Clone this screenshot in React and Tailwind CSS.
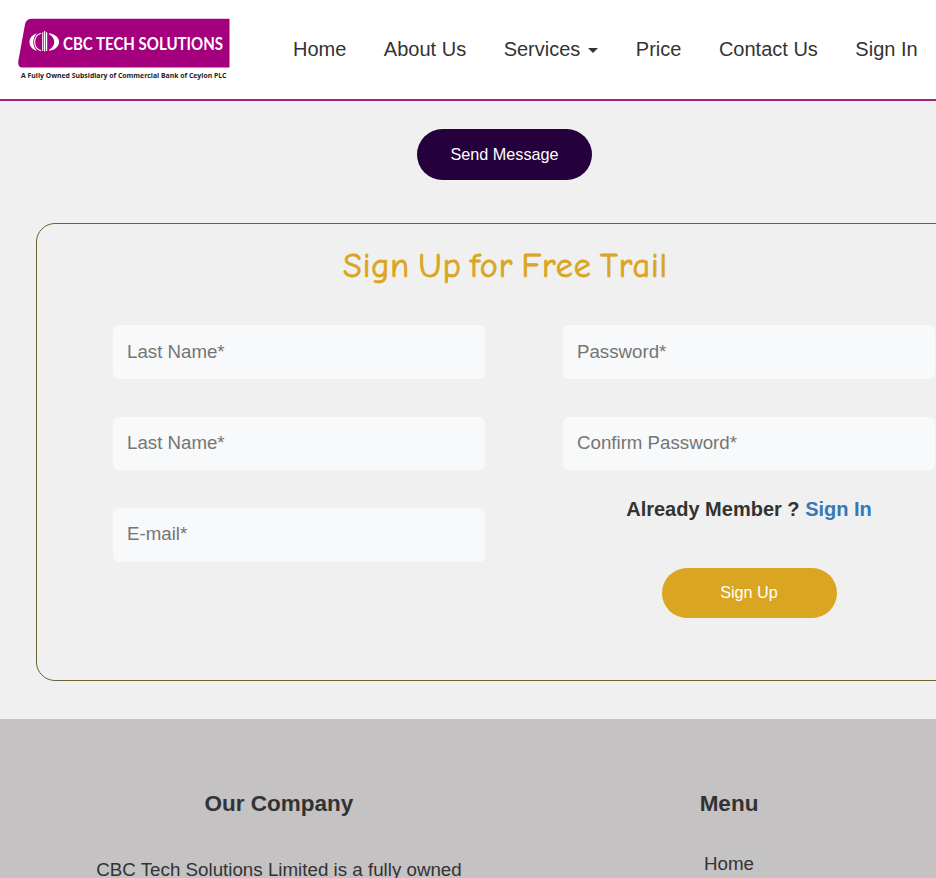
function Logo() {
  return (
    <svg className="block h-[70px] w-[220px] overflow-visible" viewBox="0 0 220 70" role="img" aria-label="CBC Tech Solutions">
      <path d="M17 3.700H214.500V52.600H7.500Q2.500 52.600 3.300 46L10 9.500Q11 3.700 17 3.700Z" fill="#a4007e" />
      <g fill="#fff">
        <path d="M22 18.200C12 21 12 33 22 35.800C17 31 17 23 22 18.200Z" />
        <path d="M26 18.200C17.500 21 17.500 33 26 35.800" fill="none" stroke="#fff" strokeWidth="1.100" />
        <path d="M27.200 17.500L28.300 17V36H27.200ZM29 16H30.300V36.500H29ZM31 17L32.200 17.500V36H31Z" />
        <path d="M34 18.200C47.500 20 47.500 34 34 35.800V34.800C41 31 41 23 34 19.200Z" />
      </g>
      <text x="48" y="34.700" fill="#fff" fontFamily="Lato, sans-serif" fontWeight="700" fontSize="16.500" textLength="160" lengthAdjust="spacingAndGlyphs">CBC TECH SOLUTIONS</text>
      <text x="6" y="63.300" fill="#222" fontFamily="'Open Sans', sans-serif" fontWeight="700" fontSize="6.900" textLength="205.500" lengthAdjust="spacingAndGlyphs">A Fully Owned Subsidiary of Commercial Bank of Ceylon PLC</text>
    </svg>
  );
}

function Field({ label, type = "text", className = "" }) {
  return (
    <input
      type={type}
      placeholder={label}
      className={`block w-[372px] rounded-[6px] bg-[#f8f9fa] px-[14px] text-[18.700px] text-[#333] placeholder:text-[#757575] placeholder:opacity-100 ${className}`}
    />
  );
}

export default function App() {
  return (
    <div className="h-[878px] w-full overflow-hidden bg-[#f0f0f0] font-['Liberation_Sans',Arial,sans-serif] text-[#333]">
      <header className="flex h-[101px] items-start border-b-2 border-[#a4237f] bg-white pl-[15px] pt-[15px]">
        <Logo />
        <nav className="ml-[58px] flex gap-[37.500px] pt-[19px] text-[20px] leading-[30px] whitespace-nowrap">
          <a>Home</a>
          <a>About Us</a>
          <a className="flex items-center">
            Services
            <span className="ml-2 mt-[3px] border-x-[5px] border-t-[5px] border-x-transparent border-t-[#333]" />
          </a>
          <a>Price</a>
          <a>Contact Us</a>
          <a>Sign In</a>
        </nav>
      </header>

      <main className="h-[618px] pt-7">
        <button className="ml-[417px] block h-[51px] w-[175px] rounded-full bg-[#25003c] text-[16.200px] text-white">Send Message</button>
        <section className="ml-9 mt-[43px] h-[458px] w-[938px] rounded-[19px] border border-[#6b642e]">
          <h2 className="ml-[305px] mt-[24px] h-[38px] w-[330px]">
            <svg className="block h-[46px] w-[330px] overflow-visible" viewBox="0 0 330 46">
              <text x="1" y="29" fill="#daa520" stroke="#daa520" strokeWidth=".8" fontFamily="'Comic Sans MS', 'Comic Neue', 'Open Sans', sans-serif" fontSize="34" wordSpacing="-4" textLength="324" lengthAdjust="spacing">Sign Up for Free Trail</text>
            </svg>
          </h2>
          <div className="mt-[39px] flex gap-[78px] pl-[76px]">
            <div className="shrink-0">
              <Field label="Last Name*" className="h-[54px] pb-px" />
              <Field label="Last Name*" className="mt-[38px] h-[53px] pb-[2px]" />
              <Field label="E-mail*" className="mt-[38px] h-[54px] pb-[2px]" />
            </div>
            <div className="flex w-[372px] shrink-0 flex-col items-center">
              <Field label="Password*" type="password" className="h-[54px] pb-px" />
              <Field label="Confirm Password*" type="password" className="mt-[38px] h-[53px] pb-[2px]" />
              <p className="mt-[25px] text-[20px] font-bold leading-[28px]">
                Already Member ? <a className="text-[#337ab7]">Sign In</a>
              </p>
              <button className="mt-[45px] h-[50px] w-[175px] rounded-full bg-[#daa520] pb-[2px] text-[16.200px] text-white">Sign Up</button>
            </div>
          </div>
        </section>
      </main>

      <footer className="flex h-[159px] overflow-hidden bg-[#c4c2c3] pl-[54px] text-center text-[18.750px]">
        <div className="w-[450px] shrink-0">
          <h3 className="mt-[71px] text-[22.500px] font-bold leading-[27px]">Our Company</h3>
          <p className="mt-[39px] leading-[27px]">CBC Tech Solutions Limited is a fully owned</p>
        </div>
        <div className="w-[450px] shrink-0">
          <h3 className="mt-[71px] text-[22.500px] font-bold leading-[27px]">Menu</h3>
          <p className="mt-[33px] leading-[27px]">Home</p>
        </div>
      </footer>
    </div>
  );
}
